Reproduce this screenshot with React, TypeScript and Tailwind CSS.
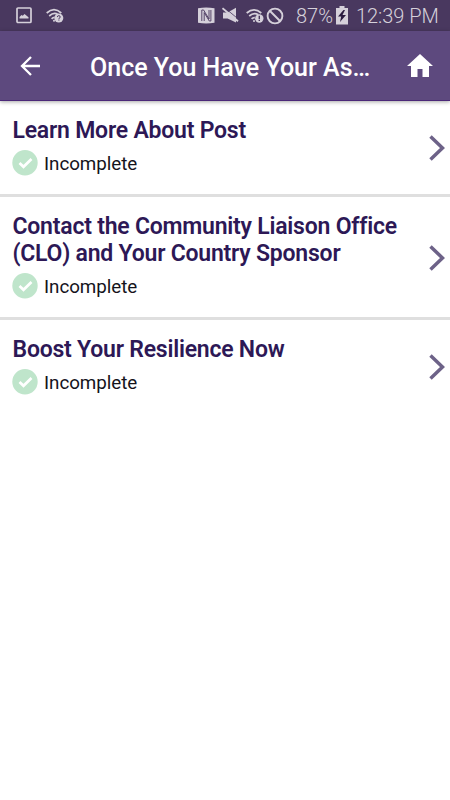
import React from 'react';

interface Task {
  title: string[];
  status: string;
}

const tasks: Task[] = [
  { title: ['Learn More About Post'], status: 'Incomplete' },
  { title: ['Contact the Community Liaison Office', '(CLO) and Your Country Sponsor'], status: 'Incomplete' },
  { title: ['Boost Your Resilience Now'], status: 'Incomplete' },
];

const StatusBar: React.FC = () => (
  <div className="flex h-[31px] items-center bg-[#49385f] text-[#d5d0da]">
    {/* Notifications */}
    <svg width="16" height="17" viewBox="0 0 16 17" className="ml-4">
      <rect x="1" y="1" width="14" height="14.5" rx="1" fill="none" stroke="currentColor" strokeWidth="1.7" />
      <path d="M3.5 11.5V10l2-2 1.3.8L8.5 7l4 3.2v1.3z" fill="currentColor" />
    </svg>
    <svg width="18" height="16" viewBox="0 0 18 16" className="ml-[14px]">
      <g fill="none" stroke="currentColor" strokeWidth="1.7">
        <path d="M.7 5Q8 -1.6 15.3 5" />
        <path d="M3.2 8Q8 3.8 12 6.6" />
        <path d="M5.6 10.8Q7 9.4 8.6 9.4" />
      </g>
      <circle cx="8" cy="12.8" r="1" fill="currentColor" />
      <circle cx="12.8" cy="10" r="4.5" fill="currentColor" />
      <path d="M11.4 9.1q0-1.5 1.4-1.5t1.4 1.5q0 .8-1.3 1.4v.6m0 .5v1" fill="none" stroke="#49385f" strokeWidth="1" />
    </svg>

    {/* System state */}
    <svg width="17" height="17" viewBox="0 0 17 17" className="ml-[134px]">
      <path d="M0 1.2Q8 0 16.5 1.2V15.8Q8 17 0 15.8z" fill="currentColor" />
      <path d="M3.8 14V3h1.8l5.4 9V3M12.9 3v11h-1.6L6.2 5.6V14" fill="none" stroke="#49385f" strokeWidth="0.9" />
    </svg>
    <svg width="17" height="17" viewBox="0 0 17 17" className="ml-[7px]">
      <path d="M1 5.4h4.6L14 .8v14.6l-8.4-4H1z" fill="currentColor" />
      <path d="M1.7 0 16.5 12.2" stroke="#49385f" strokeWidth="0.8" />
      <path d="M.5 1.2 16 14.2" stroke="currentColor" strokeWidth="1.8" />
    </svg>
    <svg width="18" height="16" viewBox="0 0 18 16" className="ml-[7px]">
      <g fill="none" stroke="currentColor" strokeWidth="1.8">
        <path d="M.7 5Q8 -1.2 15.3 5" />
        <path d="M3.2 8Q8 4 12.3 6.8" />
        <path d="M5.6 10.9Q7 9.5 8.8 9.6" />
      </g>
      <circle cx="8" cy="13" r="1" fill="currentColor" />
      <circle cx="13.3" cy="10.5" r="4.2" fill="currentColor" />
      <path d="M13.3 7.8v3.1m0 .9v1.2" stroke="#49385f" strokeWidth="1.4" />
    </svg>
    <svg width="18" height="18" viewBox="0 0 18 18" className="ml-[2px]">
      <circle cx="9" cy="9" r="7.4" fill="none" stroke="currentColor" strokeWidth="1.9" />
      <path d="m4 4 10 10" stroke="currentColor" strokeWidth="1.9" />
    </svg>
    <span className="ml-[12px] w-[36px] pt-px text-[20px] font-light whitespace-nowrap">87%</span>
    <svg width="12" height="19" viewBox="0 0 12 19" className="ml-[4px]">
      <path d="M3.5 0h5v2H12v16.5H0V2h3.5z" fill="currentColor" />
      <path d="M7.5 4 2 10.5h3.2L4 16l6-7H6.5L9 4z" fill="#2b1b40" />
    </svg>
    <span className="ml-[8px] pt-px text-[20px] font-light tracking-[-0.05px] whitespace-nowrap">12:39 PM</span>
  </div>
);

const AppBar: React.FC = () => (
  <header className="relative flex h-[70px] items-center border-b border-[#4b2878] bg-[#5d497e] text-white shadow-[0_1px_4px_rgba(0,0,0,0.35)]">
    <button aria-label="Back" className="ml-5 h-5 w-5">
      <svg width="20" height="20" viewBox="0 0 20 20" fill="none" stroke="currentColor" strokeWidth="2.3">
        <path d="M20 10H2M11 1 2 10l9 9" />
      </svg>
    </button>
    <h1 className="ml-[50px] w-[290px] pt-[4px] text-[25px] leading-8 font-medium whitespace-nowrap">Once You Have Your As…</h1>
    <button aria-label="Home" className="ml-[27px]">
      <svg width="26" height="23" viewBox="0 0 26 23" fill="currentColor">
        <path d="M13 0 26 12h-4v11h-6.5v-8h-5v8H4V12H0z" />
      </svg>
    </button>
  </header>
);

const TaskRow: React.FC<{ task: Task }> = ({ task }) => (
  <li className="flex items-center justify-between border-b-[3px] border-[#dfdfdf] pt-4 pr-[5px] pb-[18px] pl-3 last:border-transparent">
    <div>
      <h2 className="pl-[0.5px] text-[23px] leading-[27px] font-semibold tracking-[-0.22px] whitespace-nowrap text-[#2d1856] [font-variant-ligatures:none]">
        {task.title.map((line) => (
          <div key={line}>{line}</div>
        ))}
      </h2>
      <div className="mt-[6px] flex h-[26px] items-center gap-[6px]">
        <svg width="26" height="26" viewBox="0 0 26 26">
          <circle cx="13" cy="12.8" r="12.7" fill="#bfe5cb" />
          <path d="m7.5 13 4 3.8 8-7.8" fill="none" stroke="#fff" strokeWidth="2.7" />
        </svg>
        <span className="pt-px text-[18.8px] leading-6 tracking-[-0.05px] text-[#15131c]">{task.status}</span>
      </div>
    </div>
    <svg width="16" height="26" viewBox="0 0 16 26" fill="none" stroke="#6d6288" strokeWidth="3.5" className="mt-[3px]">
      <path d="m1.5 1.5 12 11.5-12 11.5" />
    </svg>
  </li>
);

const App: React.FC = () => (
  <div className="h-[800px] w-[450px] overflow-hidden bg-white font-['Roboto',sans-serif]">
    <StatusBar />
    <AppBar />
    <ul>
      {tasks.map((task) => (
        <TaskRow key={task.title[0]} task={task} />
      ))}
    </ul>
  </div>
);

export default App;
